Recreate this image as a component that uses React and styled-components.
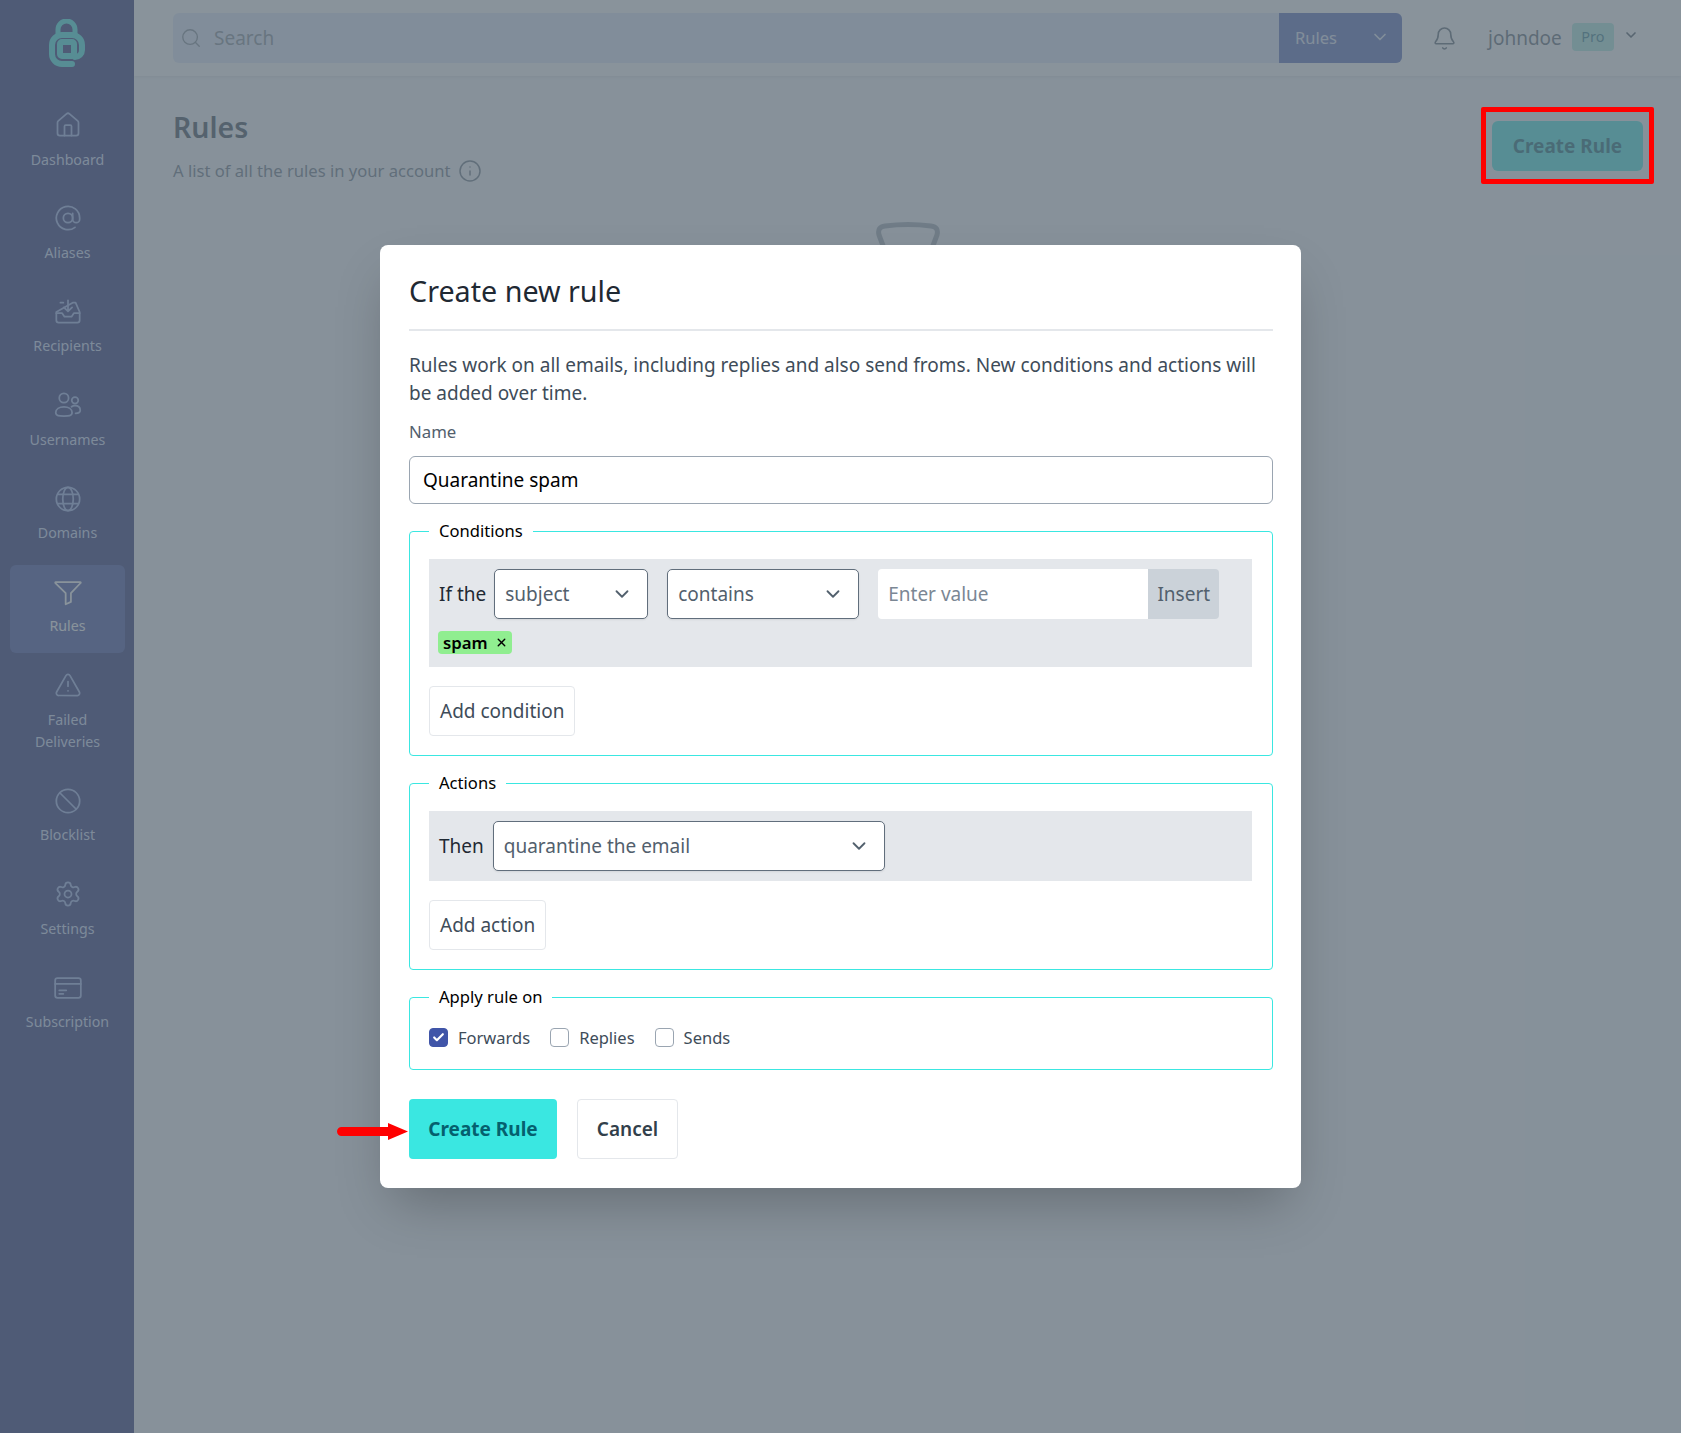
import React from 'react'
import styled, { createGlobalStyle } from 'styled-components'
import {
  House,
  AtSign,
  TriangleAlert,
  Ban,
  Settings,
  Bell,
  Search,
  ChevronDown,
  Info,
  Check,
  X,
} from 'lucide-react'

const GlobalStyle = createGlobalStyle`
  html, body {
    margin: 0;
    padding: 0;
    height: 100%;
  }
  body {
    font-family: "Noto Sans", "Open Sans", sans-serif;
    color: #1f2933;
    background: #f5f7fa;
  }
  * {
    box-sizing: border-box;
  }
`

const Page = styled.div`
  position: relative;
  display: flex;
  height: 100vh;
  min-height: 1433px;
  overflow: hidden;
`

const Sidebar = styled.aside`
  flex: 0 0 134px;
  background: #19216c;
  padding: 0 9px 0 10px;
`

const LogoBox = styled.div`
  height: 98px;
  padding: 19px 2px 0 0;
  display: flex;
  justify-content: center;
`

const Nav = styled.nav`
  display: flex;
  flex-direction: column;
  gap: 5.4px;
`

const NavItem = styled.a`
  display: flex;
  flex-direction: column;
  align-items: center;
  padding: 14px 0 15.5px;
  border-radius: 6px;
  background: ${(p) => (p.$active ? '#35469c' : 'transparent')};
  color: ${(p) => (p.$active ? '#ffffff' : '#d0dcf8')};
  font-size: 14.2px;
  line-height: 22px;
  text-align: center;

  svg {
    width: 28px;
    height: 28px;
    margin: -1px 0 9.5px;
    color: ${(p) => (p.$active ? '#ffffff' : '#98aeeb')};
    stroke-width: 1.5;
  }
`

const Content = styled.div`
  flex: 1;
  min-width: 0;
`

const Header = styled.header`
  display: flex;
  align-items: center;
  height: 76px;
  padding-left: 39px;
  background: #ffffff;
  box-shadow: 0 1px 3px rgba(0, 0, 0, 0.1);
`

const SearchBar = styled.div`
  flex: 0 0 1229px;
  display: flex;
  height: 50px;
  border-radius: 6px;
  background: #e0e8f9;
  overflow: hidden;
`

const SearchField = styled.div`
  flex: 1;
  display: flex;
  align-items: center;
  gap: 12px;
  padding-left: 7px;
  font-size: 19px;
  color: #7b8794;

  svg {
    color: #7b8794;
  }
`

const ScopeSelect = styled.div`
  flex: 0 0 123px;
  display: flex;
  align-items: center;
  justify-content: space-between;
  padding: 0 12px 2px 16px;
  background: #4c63b6;
  color: #e0e8f9;
  font-size: 16.5px;
`

const BellButton = styled.div`
  display: flex;
  margin: 0 31px 0 30px;
  color: #52606d;
`

const UserName = styled.span`
  font-size: 19px;
  color: #52606d;
`

const PlanBadge = styled.span`
  margin-left: 10px;
  width: 42px;
  height: 28px;
  line-height: 26px;
  border-radius: 4px;
  background: #a8ecdf;
  color: #2b7a8a;
  font-size: 14.5px;
  text-align: center;
  position: relative;
  top: -1px;
`

const UserChevron = styled.span`
  display: flex;
  margin-left: 9px;
  position: relative;
  top: -3px;
  color: #3e4c59;
`

const Main = styled.main`
  padding: 0 38px 0 39px;
`

const PageHead = styled.div`
  display: flex;
  justify-content: space-between;
  align-items: flex-start;
  padding-top: 33px;
`

const PageTitle = styled.h1`
  margin: 0;
  font-size: 28.5px;
  line-height: 36px;
  font-weight: 600;
  color: #323f4b;
`

const PageSubtitle = styled.p`
  display: flex;
  align-items: center;
  gap: 8px;
  margin: 14px 0 0;
  font-size: 16.6px;
  line-height: 24px;
  color: #616e7c;
`

const HeadButton = styled.button`
  margin: 12px 0 0;
  width: 151px;
  height: 50px;
  border: 0;
  border-radius: 6px;
  background: #3ae7e1;
  color: #05606e;
  font: 700 19px "Noto Sans", sans-serif;
`

const EmptyState = styled.div`
  display: flex;
  justify-content: center;
  margin-top: 38px;
`

const Overlay = styled.div`
  position: absolute;
  inset: 0;
  display: flex;
  align-items: center;
  justify-content: center;
  background: rgba(97, 111, 122, 0.75);
`

const Callout = styled.div`
  position: absolute;
  top: 107px;
  right: 27px;
  width: 173px;
  height: 77px;
  border: 5px solid #ff0000;
  border-radius: 2px;
`

const Modal = styled.div`
  width: 921px;
  padding: 29px 28px 29px 29px;
  border-radius: 8px;
  background: #ffffff;
  box-shadow: 0 25px 50px -12px rgba(0, 0, 0, 0.25);
`

const ModalTitle = styled.h2`
  margin: 0;
  padding-bottom: 21px;
  border-bottom: 2px solid #e4e7eb;
  font-size: 28.7px;
  line-height: 34px;
  font-weight: 400;
  color: #1f2933;
`

const Intro = styled.p`
  margin: 20px 0 0;
  font-size: 19px;
  line-height: 28px;
  color: #3e4c59;
`

const FieldLabel = styled.label`
  display: block;
  margin-top: 13px;
  font-size: 16.8px;
  line-height: 24px;
  color: #52606d;
`

const NameInput = styled.input`
  display: block;
  width: 100%;
  height: 48px;
  margin-top: 12px;
  padding: 0 13px;
  border: 1px solid #9aa5b1;
  border-radius: 6px;
  background: #fff;
  color: #000;
  font: 400 19px "Noto Sans", sans-serif;
  outline: 0;
`

const Group = styled.fieldset`
  margin: 15px 0 0;
  padding: 0 20px ${(p) => p.$bottom || 19}px 19px;
  min-width: 0;
  border: 1px solid #3ae7e1;
  border-radius: 4px;
`

const GroupTitle = styled.legend`
  padding: 0 10px;
  font-size: 16.6px;
  line-height: 24px;
  color: #000;
`

const RuleRow = styled.div`
  display: flex;
  flex-wrap: wrap;
  align-items: center;
  margin-top: 16px;
  padding: 10px 9px 10px 10px;
  background: #e4e7eb;
`

const RowLabel = styled.span`
  margin-right: ${(p) => p.$gap || 8}px;
  font-size: 19px;
  color: #1f2933;
`

const SelectBox = styled.div`
  display: flex;
  align-items: center;
  justify-content: space-between;
  width: ${(p) => p.$width}px;
  height: 50px;
  margin-right: 19px;
  padding: 0 14px 1px 10px;
  border: 1px solid #616e7c;
  border-radius: 5px;
  background: #fff;
  box-shadow: 0 1px 2px rgba(0, 0, 0, 0.08);
  font-size: 19px;
  color: #52606d;
`

const ValueInput = styled.input`
  width: 270px;
  height: 50px;
  padding: 0 10px 1px;
  border: 0;
  border-radius: 4px 0 0 4px;
  background: #fff;
  font: 400 19px "Noto Sans", sans-serif;
  outline: 0;

  &::placeholder {
    color: #7b8794;
    opacity: 1;
  }
`

const InsertButton = styled.button`
  width: 71px;
  height: 50px;
  border: 0;
  border-radius: 0 4px 4px 0;
  background: #cbd2d9;
  color: #52606d;
  font: 400 19px "Noto Sans", sans-serif;
`

const TagLine = styled.div`
  flex: 0 0 100%;
  display: flex;
  margin: 12px 0 3px -1px;
`

const Tag = styled.span`
  display: inline-flex;
  align-items: center;
  gap: 7px;
  height: 23px;
  padding: 0 4px 0 5px;
  border-radius: 4px;
  background: #90ee90;
  color: #000;
  font-size: 16.8px;
  font-weight: 600;
`

const GhostButton = styled.button`
  display: block;
  height: 50px;
  margin-top: 19px;
  padding: 0 10px;
  border: 1px solid #e4e7eb;
  border-radius: 4px;
  background: #fff;
  color: #3e4c59;
  font: 400 19px "Noto Sans", sans-serif;
`

const CheckRow = styled.div`
  display: flex;
  align-items: center;
  height: 19px;
  margin-top: 19px;
`

const CheckItem = styled.label`
  display: flex;
  align-items: center;
  gap: 10px;
  margin-right: 20px;
  font-size: 16.5px;
  color: #3e4c59;
`

const CheckBox = styled.span`
  display: flex;
  align-items: center;
  justify-content: center;
  width: 19px;
  height: 19px;
  border-radius: 4px;
  border: 1px solid ${(p) => (p.$checked ? '#4055a8' : '#9aa5b1')};
  background: ${(p) => (p.$checked ? '#4055a8' : '#fff')};
  color: #fff;
`

const Footer = styled.div`
  position: relative;
  display: flex;
  gap: 20px;
  margin-top: 29px;
`

const PrimaryButton = styled.button`
  width: 148px;
  height: 60px;
  border: 0;
  border-radius: 4px;
  background: #3ae7e1;
  color: #05606e;
  font: 700 19px "Noto Sans", sans-serif;
`

const CancelButton = styled.button`
  width: 101px;
  height: 60px;
  border: 1px solid #e4e7eb;
  border-radius: 4px;
  background: #fff;
  color: #323f4b;
  font: 600 19px "Noto Sans", sans-serif;
`

const PointerArrow = styled.svg`
  position: absolute;
  left: -72px;
  top: 24px;
`

const LogoMark = () => (
  <svg width="36" height="48" viewBox="0 0 36 48" fill="none" stroke="#3ae7e1">
    <path d="M9 15V10.500a8.500 8.500 0 0 1 17 0V15" strokeWidth="5" />
    <path
      d="M23 45H13A10 10 0 0 1 3 35V26A10 10 0 0 1 13 16H23A10 10 0 0 1 33 26V31A7 7 0 0 1 26 38"
      strokeWidth="6"
      strokeLinecap="round"
    />
    <rect x="11" y="23" width="14" height="14" rx="2" strokeWidth="6" />
  </svg>
)

const TrayIcon = () => (
  <svg viewBox="0 0 24 24" fill="none" stroke="currentColor" strokeLinecap="round" strokeLinejoin="round">
    <path d="M5.500 4H8M16 4h2.500L22 12v7a2 2 0 0 1-2 2H4a2 2 0 0 1-2-2v-7z" />
    <path d="M2 13h5l2 3h6l2-3h5" />
    <path d="M12 2v9M8.500 8l3.500 3.500L15.500 8" />
  </svg>
)

const PeopleIcon = () => (
  <svg viewBox="0 0 24 24" fill="none" stroke="currentColor" strokeLinecap="round" strokeLinejoin="round">
    <circle cx="8.500" cy="6" r="4" />
    <circle cx="18" cy="8" r="2.800" />
    <path d="M1.500 18.500c0-3 3-5 7-5s7 2 7 5-3 3-7 3-7 0-7-3z" />
    <path d="M15 13.500c1-.8 2-1 3-1 2.800 0 4.500 1.600 4.500 4 0 2.400-2 2.600-4 2.600" />
  </svg>
)

const GlobeIcon = () => (
  <svg viewBox="0 0 24 24" fill="none" stroke="currentColor" strokeLinecap="round" strokeLinejoin="round">
    <circle cx="12" cy="12" r="10" />
    <ellipse cx="12" cy="12" rx="4.500" ry="10" />
    <path d="M3.500 8h17M3.500 16h17" />
  </svg>
)

const FunnelIcon = () => (
  <svg viewBox="0 0 24 24" fill="none" stroke="currentColor" strokeLinecap="round" strokeLinejoin="round">
    <path d="M1.500 3.500h21c.5 0 .6.500.3.800L14.500 13v7.500l-4.500 2V13L1.200 4.300c-.3-.3-.2-.8.3-.8z" />
  </svg>
)

const CardIcon = () => (
  <svg viewBox="0 0 24 24" fill="none" stroke="currentColor" strokeLinecap="round" strokeLinejoin="round">
    <rect x="1" y="3.500" width="22" height="17" rx="2" />
    <path d="M1 8.500h22M4.500 14h6M4.500 17h3.500" />
  </svg>
)

const navItems = [
  { label: 'Dashboard', icon: <House /> },
  { label: 'Aliases', icon: <AtSign /> },
  { label: 'Recipients', icon: <TrayIcon /> },
  { label: 'Usernames', icon: <PeopleIcon /> },
  { label: 'Domains', icon: <GlobeIcon /> },
  { label: 'Rules', icon: <FunnelIcon />, active: true },
  { label: <>Failed<br />Deliveries</>, icon: <TriangleAlert /> },
  { label: 'Blocklist', icon: <Ban /> },
  { label: 'Settings', icon: <Settings /> },
  { label: 'Subscription', icon: <CardIcon /> },
]

const App = () => {
  return (
    <Page>
      <GlobalStyle />

      <Sidebar>
        <LogoBox>
          <LogoMark />
        </LogoBox>
        <Nav>
          {navItems.map((item, i) => (
            <NavItem key={i} $active={item.active}>
              {item.icon}
              <span>{item.label}</span>
            </NavItem>
          ))}
        </Nav>
      </Sidebar>

      <Content>
        <Header>
          <SearchBar>
            <SearchField>
              <Search size={22} strokeWidth={1.5} />
              Search
            </SearchField>
            <ScopeSelect>
              Rules
              <ChevronDown size={20} />
            </ScopeSelect>
          </SearchBar>
          <BellButton>
            <Bell size={25} strokeWidth={1.5} />
          </BellButton>
          <UserName>johndoe</UserName>
          <PlanBadge>Pro</PlanBadge>
          <UserChevron>
            <ChevronDown size={16} strokeWidth={2.5} />
          </UserChevron>
        </Header>

        <Main>
          <PageHead>
            <div>
              <PageTitle>Rules</PageTitle>
              <PageSubtitle>
                A list of all the rules in your account
                <Info size={24} strokeWidth={1.5} />
              </PageSubtitle>
            </div>
            <HeadButton>Create Rule</HeadButton>
          </PageHead>
          <EmptyState>
            <svg width="70" height="70" viewBox="0 0 70 70" fill="none" stroke="#9aa5b1" strokeWidth="5">
              <path d="M12 30 L6 14 Q4 6 12 5 Q35 2 58 5 Q66 6 64 14 L58 30" />
            </svg>
          </EmptyState>
        </Main>
      </Content>

      <Overlay>
        <Modal>
          <ModalTitle>Create new rule</ModalTitle>
          <Intro>
            Rules work on all emails, including replies and also send froms. New conditions and
            actions will be added over time.
          </Intro>
          <FieldLabel>Name</FieldLabel>
          <NameInput defaultValue="Quarantine spam" />

          <Group>
            <GroupTitle>Conditions</GroupTitle>
            <RuleRow>
              <RowLabel>If the</RowLabel>
              <SelectBox $width={154}>
                subject
                <ChevronDown size={22} strokeWidth={2} />
              </SelectBox>
              <SelectBox $width={192}>
                contains
                <ChevronDown size={22} strokeWidth={2} />
              </SelectBox>
              <ValueInput placeholder="Enter value" />
              <InsertButton>Insert</InsertButton>
              <TagLine>
                <Tag>
                  spam
                  <X size={13} strokeWidth={2.5} />
                </Tag>
              </TagLine>
            </RuleRow>
            <GhostButton>Add condition</GhostButton>
          </Group>

          <Group>
            <GroupTitle>Actions</GroupTitle>
            <RuleRow>
              <RowLabel $gap={9}>Then</RowLabel>
              <SelectBox $width={392}>
                quarantine the email
                <ChevronDown size={22} strokeWidth={2} />
              </SelectBox>
            </RuleRow>
            <GhostButton>Add action</GhostButton>
          </Group>

          <Group $bottom={22}>
            <GroupTitle>Apply rule on</GroupTitle>
            <CheckRow>
              <CheckItem>
                <CheckBox $checked>
                  <Check size={13} strokeWidth={4} />
                </CheckBox>
                Forwards
              </CheckItem>
              <CheckItem>
                <CheckBox />
                Replies
              </CheckItem>
              <CheckItem>
                <CheckBox />
                Sends
              </CheckItem>
            </CheckRow>
          </Group>

          <Footer>
            <PointerArrow width="72" height="18" viewBox="0 0 72 18">
              <path d="M4.500 4H51V0L71 8.500 51 17V13H4.500A4.500 4.500 0 0 1 4.500 4Z" fill="#ff0000" />
            </PointerArrow>
            <PrimaryButton>Create Rule</PrimaryButton>
            <CancelButton>Cancel</CancelButton>
          </Footer>
        </Modal>
        <Callout />
      </Overlay>
    </Page>
  )
}

export default App
